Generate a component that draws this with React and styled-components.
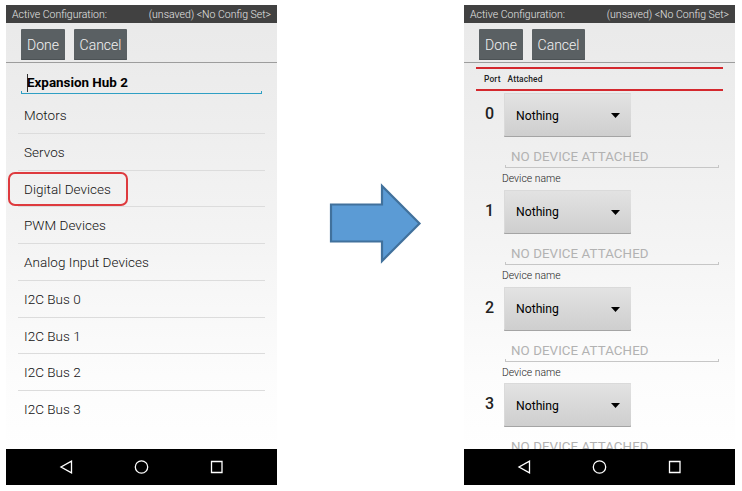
import React from 'react';
import styled, { createGlobalStyle } from 'styled-components';

const Global = createGlobalStyle`
  *, *::before, *::after { box-sizing: border-box; }
  body { margin: 0; background: #fff; font-family: Roboto, "Liberation Sans", sans-serif; }
  button, input { font: inherit; border: 0; margin: 0; padding: 0; }
`;

const Page = styled.main`
  display: grid;
  grid-template-columns: 271px 187px 271px;
  width: 742px;
  height: 491px;
  padding: 5px 0 6px 6px;
  overflow: hidden;
`;

const Phone = styled.section`
  display: flex;
  flex-direction: column;
  height: 480px;
  overflow: hidden;
  background: linear-gradient(#e9e9e9 0, #ededed 100px, #f3f3f3 220px, #fcfcfc 370px, #fff 450px);
`;

const StatusBar = styled.header`
  flex: none;
  display: flex;
  justify-content: space-between;
  height: 18px;
  padding: 0 6px;
  background: #414141;
  color: #e6e6e6;
  font-size: 10.5px;
  font-weight: 300;
  line-height: 19px;
  white-space: nowrap;
`;

const Toolbar = styled.div`
  flex: none;
  display: flex;
  gap: 9px;
  height: 40px;
  padding: 6px 15px 0;
  border-bottom: 1px solid #9d9d9d;
`;

const ActionButton = styled.button`
  width: ${(p) => p.$width}px;
  height: 31px;
  border-radius: 1px;
  background: #5a6063;
  box-shadow: inset 0 -1px #4c5255;
  color: #f2f2f2;
  font-size: 14px;
  font-weight: 300;
  line-height: 32px;
`;

const Body = styled.div`
  flex: 1;
  min-height: 0;
  overflow: hidden;
`;

const NavBar = styled.nav`
  flex: none;
  display: flex;
  justify-content: space-between;
  align-items: center;
  height: 36px;
  padding: 0 53px;
  background: #000;
  svg { display: block; fill: none; stroke: #fff; stroke-width: 1.3; }
`;

const NameField = styled.div`
  height: 31px;
  margin: 0 15px;
  padding: 9px 0 0 6px;
  color: #000;
  font-size: 13.4px;
  font-weight: 700;
  line-height: 21px;
  white-space: nowrap;
  background:
    linear-gradient(#2f9fc4, #2f9fc4) 0 100% / 100% 1px no-repeat,
    linear-gradient(#2f9fc4, #2f9fc4) 0 100% / 1px 3px no-repeat,
    linear-gradient(#2f9fc4, #2f9fc4) 100% 100% / 1px 3px no-repeat;
`;

const Caret = styled.span`
  display: inline-block;
  width: 1px;
  height: 18px;
  margin-right: -1px;
  vertical-align: middle;
  background: #333;
`;

const List = styled.ul`
  list-style: none;
  margin: 3px 12px 0;
  padding: 0;
`;

const ListItem = styled.li`
  position: relative;
  height: 36.75px;
  padding-left: 6px;
  border-bottom: 1px solid #dcdcdc;
  color: #111;
  font-size: 13.5px;
  font-weight: 300;
  line-height: 37px;
  letter-spacing: 0.04px;
  white-space: nowrap;
  &:last-child { border-bottom: 0; }
`;

const Highlight = styled.span`
  position: absolute;
  left: -10px;
  top: 1px;
  width: 120px;
  height: 34px;
  border: 2px solid #de3a3e;
  border-radius: 7px;
`;

const ArrowCell = styled.div`
  padding: 177px 0 0 52px;
  svg { display: block; }
`;

const TableHead = styled.div`
  display: flex;
  gap: 7px;
  height: 24px;
  margin: 4px 12px 0;
  padding-left: 8px;
  border: solid #d4282e;
  border-width: 2px 0;
  color: #222;
  font-size: 8.4px;
  font-weight: 500;
  line-height: 21px;
  letter-spacing: 0.15px;
`;

const Ports = styled.div`
  padding: 2px 16px 0 20px;
`;

const PortRow = styled.div`
  display: grid;
  grid-template-columns: 20px 1fr;
  height: 96.75px;
`;

const PortNumber = styled.div`
  padding-left: 1px;
  color: #222;
  font-size: 16px;
  font-weight: 500;
  line-height: 42px;
`;

const Select = styled.button`
  display: flex;
  justify-content: space-between;
  align-items: center;
  width: 127px;
  height: 44px;
  padding: 1px 11px 0 12px;
  border-radius: 1px;
  background: linear-gradient(#e3e3e3, #cecece);
  box-shadow: inset 0 -1px #a4a4a4, inset 0 1px #dadada, inset 1px 0 #dadada;
  color: #000;
  font-size: 12.2px;
`;

const DeviceField = styled.div`
  width: 214px;
  height: 24px;
  margin: 7px 0 0 1px;
  padding-left: 6px;
  color: #b2b2b2;
  font-size: 13.3px;
  line-height: 26px;
  letter-spacing: 0.08px;
  white-space: nowrap;
  background:
    linear-gradient(#c6c6c6, #c6c6c6) 0 100% / 100% 1px no-repeat,
    linear-gradient(#c6c6c6, #c6c6c6) 0 100% / 1px 3px no-repeat,
    linear-gradient(#c6c6c6, #c6c6c6) 100% 100% / 1px 3px no-repeat;
`;

const DeviceLabel = styled.div`
  margin-left: -2px;
  color: #222;
  font-size: 10.4px;
  font-weight: 300;
  line-height: 22px;
`;

function PhoneFrame({ children }) {
  return (
    <Phone>
      <StatusBar>
        <span>Active Configuration:</span>
        <span>(unsaved) &lt;No Config Set&gt;</span>
      </StatusBar>
      <Toolbar>
        <ActionButton $width={44}>Done</ActionButton>
        <ActionButton $width={53}>Cancel</ActionButton>
      </Toolbar>
      <Body>{children}</Body>
      <NavBar>
        <svg width="15" height="16" viewBox="0 0 15 16"><path d="M12.5 2.2v11.6L2 8z" /></svg>
        <svg width="16" height="16" viewBox="0 0 16 16"><circle cx="7.5" cy="8" r="6.2" /></svg>
        <svg width="15" height="16" viewBox="0 0 15 16"><path d="M2.5 2.5h10.5v11H2.5z" /></svg>
      </NavBar>
    </Phone>
  );
}

const items = ['Motors', 'Servos', 'Digital Devices', 'PWM Devices', 'Analog Input Devices', 'I2C Bus 0', 'I2C Bus 1', 'I2C Bus 2', 'I2C Bus 3'];
const ports = [0, 1, 2, 3];

export default function App() {
  return (
    <Page>
      <Global />
      <PhoneFrame>
        <NameField><Caret />Expansion Hub 2</NameField>
        <List>
          {items.map((item) => (
            <ListItem key={item}>
              {item}
              {item === 'Digital Devices' && <Highlight />}
            </ListItem>
          ))}
        </List>
      </PhoneFrame>
      <ArrowCell>
        <svg width="94" height="84" viewBox="0 0 94 84">
          <path d="M2 22.5h51V4L90.5 41.5 53 79V59.5H2z" fill="#5b9bd5" stroke="#41719c" strokeWidth="2.2" />
        </svg>
      </ArrowCell>
      <PhoneFrame>
        <TableHead><span>Port</span><span>Attached</span></TableHead>
        <Ports>
          {ports.map((port) => (
            <PortRow key={port}>
              <PortNumber>{port}</PortNumber>
              <div>
                <Select>
                  Nothing
                  <svg width="9" height="5" viewBox="0 0 9 5"><path d="M0 0h9L4.5 5z" /></svg>
                </Select>
                <DeviceField>NO DEVICE ATTACHED</DeviceField>
                {port < ports.length - 1 && <DeviceLabel>Device name</DeviceLabel>}
              </div>
            </PortRow>
          ))}
        </Ports>
      </PhoneFrame>
    </Page>
  );
}
